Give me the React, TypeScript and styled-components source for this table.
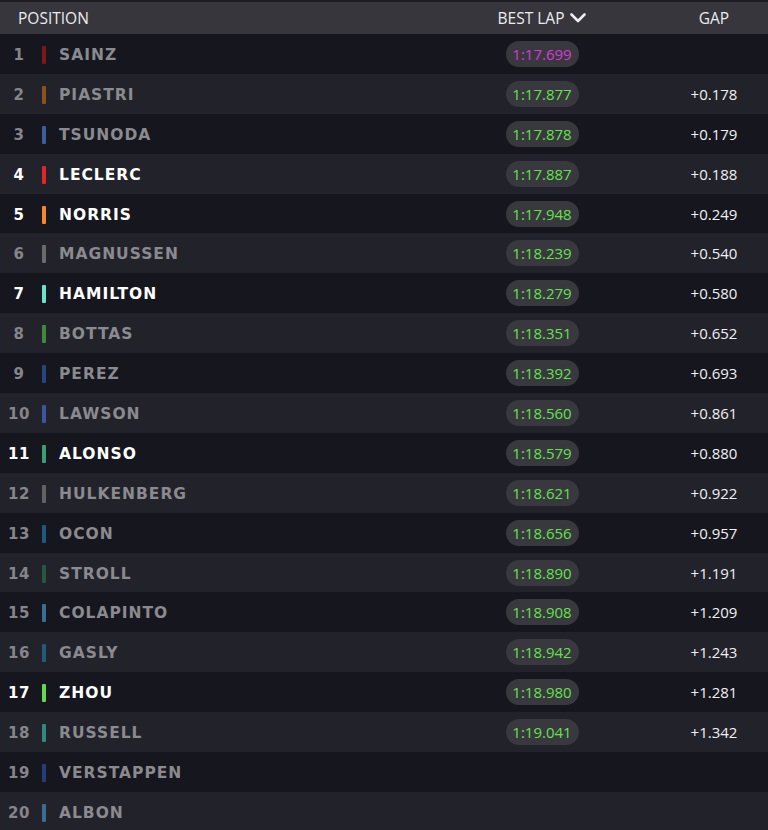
import styled, { createGlobalStyle } from 'styled-components';

type Driver = {
  pos: number;
  name: string;
  team: string;
  lap: string;
  gap?: string;
  fastest?: boolean;
  active?: boolean;
};

const DRIVERS: Driver[] = [
  { pos: 1, name: 'SAINZ', team: '#7d1719', lap: '1:17.699', fastest: true },
  { pos: 2, name: 'PIASTRI', team: '#8a511c', lap: '1:17.877', gap: '+0.178' },
  { pos: 3, name: 'TSUNODA', team: '#3f5c9e', lap: '1:17.878', gap: '+0.179' },
  { pos: 4, name: 'LECLERC', team: '#e0262b', lap: '1:17.887', gap: '+0.188', active: true },
  { pos: 5, name: 'NORRIS', team: '#f5862f', lap: '1:17.948', gap: '+0.249', active: true },
  { pos: 6, name: 'MAGNUSSEN', team: '#6a6a6c', lap: '1:18.239', gap: '+0.540' },
  { pos: 7, name: 'HAMILTON', team: '#6ae3cc', lap: '1:18.279', gap: '+0.580', active: true },
  { pos: 8, name: 'BOTTAS', team: '#3f8a3a', lap: '1:18.351', gap: '+0.652' },
  { pos: 9, name: 'PEREZ', team: '#27457e', lap: '1:18.392', gap: '+0.693' },
  { pos: 10, name: 'LAWSON', team: '#3b55a0', lap: '1:18.560', gap: '+0.861' },
  { pos: 11, name: 'ALONSO', team: '#3d9d72', lap: '1:18.579', gap: '+0.880', active: true },
  { pos: 12, name: 'HULKENBERG', team: '#626264', lap: '1:18.621', gap: '+0.922' },
  { pos: 13, name: 'OCON', team: '#1e5a7e', lap: '1:18.656', gap: '+0.957' },
  { pos: 14, name: 'STROLL', team: '#26573f', lap: '1:18.890', gap: '+1.191' },
  { pos: 15, name: 'COLAPINTO', team: '#3a6e96', lap: '1:18.908', gap: '+1.209' },
  { pos: 16, name: 'GASLY', team: '#235a78', lap: '1:18.942', gap: '+1.243' },
  { pos: 17, name: 'ZHOU', team: '#62d84a', lap: '1:18.980', gap: '+1.281', active: true },
  { pos: 18, name: 'RUSSELL', team: '#2f8a7c', lap: '1:19.041', gap: '+1.342' },
  { pos: 19, name: 'VERSTAPPEN', team: '#233e78', lap: '' },
  { pos: 20, name: 'ALBON', team: '#3a6d96', lap: '' }
];

const GlobalStyle = createGlobalStyle`
  html, body {
    margin: 0;
    padding: 0;
    background: #15151d;
  }
`;

function App() {
  return (
    <>
      <GlobalStyle />
      <Board>
        <HeaderRow>
          <HeaderLabel>POSITION</HeaderLabel>
          <HeaderCenter>
            BEST LAP
            <svg width="16" height="10" viewBox="0 0 16 10">
              <polyline
                points="1.5,1.5 8,8 14.5,1.5"
                fill="none"
                stroke="#ececee"
                strokeWidth="2.6"
                strokeLinecap="round"
                strokeLinejoin="round"
              />
            </svg>
          </HeaderCenter>
          <HeaderCenter>GAP</HeaderCenter>
        </HeaderRow>
        {DRIVERS.map((d) => (
          <Row key={d.pos} $odd={d.pos % 2 === 1}>
            <DriverCell>
              <Position $active={!!d.active}>{d.pos}</Position>
              <TeamBar $color={d.team} />
              <Name $active={!!d.active}>{d.name}</Name>
            </DriverCell>
            <LapCell>
              {d.lap && <LapPill $fastest={!!d.fastest}>{d.lap}</LapPill>}
            </LapCell>
            <GapCell>{d.gap}</GapCell>
          </Row>
        ))}
      </Board>
    </>
  );
}

const Board = styled.div`
  width: 768px;
  height: 830px;
  overflow: hidden;
  border-top: 2px solid #1c1c21;
  box-sizing: border-box;
  background: #15151d;
`;

const columns = `
  display: grid;
  grid-template-columns: 1fr 144px 108px;
  column-gap: 46px;
  align-items: center;
`;

const HeaderRow = styled.div`
  ${columns}
  height: 32px;
  background: #36363c;
  color: #ececee;
  font-family: 'Open Sans', 'Noto Sans', sans-serif;
  font-size: 15.5px;
`;

const HeaderLabel = styled.div`
  padding-left: 18px;
`;

const HeaderCenter = styled.div`
  display: flex;
  align-items: center;
  justify-content: center;
  gap: 6px;
`;

const Row = styled.div<{ $odd: boolean }>`
  ${columns}
  height: 39.9px;
  background: ${({ $odd }) => ($odd ? '#16161e' : '#22222a')};
`;

const DriverCell = styled.div`
  display: flex;
  align-items: center;
  padding-top: 2px;
`;

const Position = styled.span<{ $active: boolean }>`
  width: 38px;
  text-align: center;
  font-family: 'DejaVu Sans', sans-serif;
  font-weight: 700;
  font-size: 15px;
  letter-spacing: 0.5px;
  color: ${({ $active }) => ($active ? '#ffffff' : '#85858a')};
`;

const TeamBar = styled.span<{ $color: string }>`
  width: 4px;
  height: 18px;
  margin-left: 4px;
  border-radius: 1px;
  background: ${({ $color }) => $color};
`;

const Name = styled.span<{ $active: boolean }>`
  margin-left: 13px;
  font-family: 'DejaVu Sans', sans-serif;
  font-weight: 700;
  font-size: 15.5px;
  letter-spacing: 1px;
  color: ${({ $active }) => ($active ? '#ffffff' : '#8a8a8f')};
`;

const LapCell = styled.div`
  display: flex;
  justify-content: center;
`;

const LapPill = styled.span<{ $fastest: boolean }>`
  display: inline-flex;
  align-items: center;
  justify-content: center;
  width: 73px;
  height: 26px;
  border-radius: 13px;
  background: #38383e;
  font-family: 'Open Sans', 'Noto Sans', sans-serif;
  font-size: 15px;
  font-weight: 500;
  color: ${({ $fastest }) => ($fastest ? '#d83ad8' : '#62e34a')};
`;

const GapCell = styled.div`
  text-align: center;
  font-family: 'Open Sans', 'Noto Sans', sans-serif;
  font-size: 15px;
  color: #f0f0f2;
`;

export default App;
